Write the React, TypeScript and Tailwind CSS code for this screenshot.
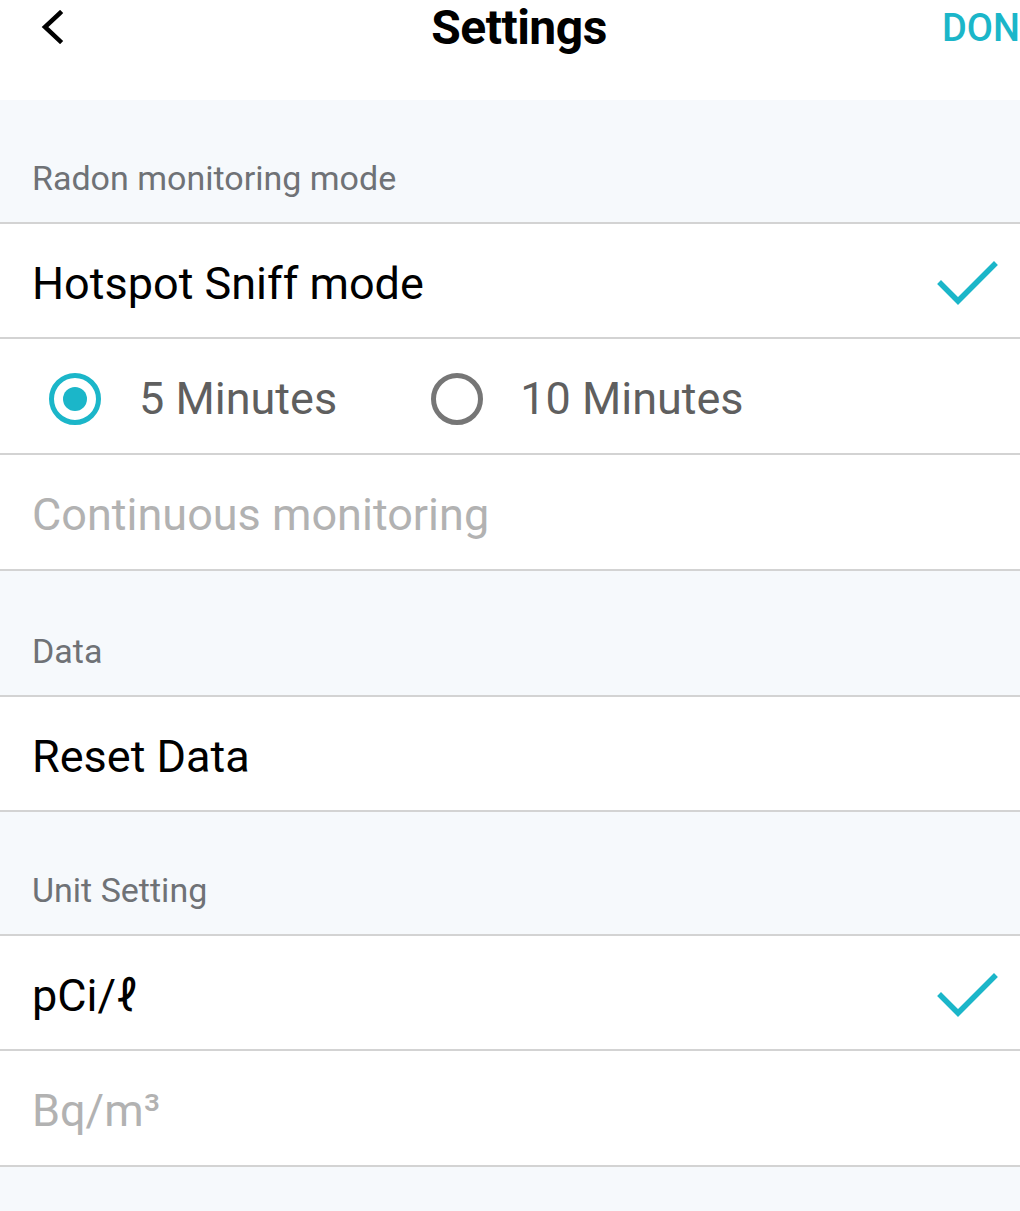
import React from "react";

const TEAL = "#1bb6c9";

function Check() {
  return (
    <svg width="64" height="50" viewBox="0 0 64 50" fill="none">
      <path d="M7 25 L24 42 L60 6" stroke={TEAL} strokeWidth="5.5" strokeLinecap="square" strokeLinejoin="miter" />
    </svg>
  );
}

function Radio({ on }: { on?: boolean }) {
  return (
    <svg width="56" height="56" viewBox="0 0 56 56">
      <circle cx="28" cy="28" r="23.5" fill="none" stroke={on ? TEAL : "#767676"} strokeWidth="5" />
      {on && <circle cx="28" cy="28" r="12" fill={TEAL} />}
    </svg>
  );
}

function SectionHeader({ label, h }: { label: string; h: string }) {
  return (
    <div className={`flex items-end bg-[#f6f9fc] border-b-2 border-[#d3d3d3] px-[32px] pb-[25px] ${h}`}>
      <span className="text-[34px] leading-[38px] text-[#6f7276]">{label}</span>
    </div>
  );
}

function Row({ children, right, h = "h-[116px]" }: { children: React.ReactNode; right?: React.ReactNode; h?: string }) {
  return (
    <div className={`flex items-center justify-between border-b-2 border-[#d3d3d3] bg-white pl-[32px] pr-[22px] pt-[6px] ${h}`}>
      {children}
      {right}
    </div>
  );
}

export default function App() {
  return (
    <div className="w-[1020px] h-[1211px] overflow-hidden bg-[#f6f9fc]" style={{ fontFamily: "Roboto, 'Noto Sans', sans-serif" }}>
      {/* top bar */}
      <div className="relative flex h-[100px] items-start justify-center bg-white">
        <svg className="absolute left-[38px] top-[10px]" width="28" height="34" viewBox="0 0 28 34" fill="none">
          <path d="M22 3 L7 17 L22 31" stroke="#000" strokeWidth="4.5" strokeLinecap="square" />
        </svg>
        <h1 className="ml-[18px] text-[48px] font-bold leading-[56px] tracking-[-0.5px] text-black">Settings</h1>
        <span className="absolute left-[942px] top-[5px] whitespace-nowrap text-[38px] font-medium leading-[46px] text-[#1bb6c9]">
          DONE
        </span>
      </div>

      <SectionHeader label="Radon monitoring mode" h="h-[124px]" />
      <Row right={<Check />} h="h-[115px]">
        <span className="text-[45px] text-black">Hotspot Sniff mode</span>
      </Row>
      <Row>
        <div className="flex items-center">
          <div className="ml-[15px] flex items-center gap-[36px]">
            <Radio on />
            <span className="text-[45px] text-[#5f5f5f]">5 Minutes</span>
          </div>
          <div className="ml-[92px] flex items-center gap-[35px]">
            <Radio />
            <span className="text-[45px] text-[#5f5f5f]">10 Minutes</span>
          </div>
        </div>
      </Row>
      <Row>
        <span className="text-[45px] text-[#b2b2b2]">Continuous monitoring</span>
      </Row>

      <SectionHeader label="Data" h="h-[126px]" />
      <Row h="h-[115px]">
        <span className="text-[45px] text-black">Reset Data</span>
      </Row>

      <SectionHeader label="Unit Setting" h="h-[124px]" />
      <Row right={<Check />} h="h-[115px]">
        <span className="text-[45px] text-black">pCi/ℓ</span>
      </Row>
      <Row>
        <span className="text-[45px] text-[#b2b2b2]">Bq/m³</span>
      </Row>
    </div>
  );
}
